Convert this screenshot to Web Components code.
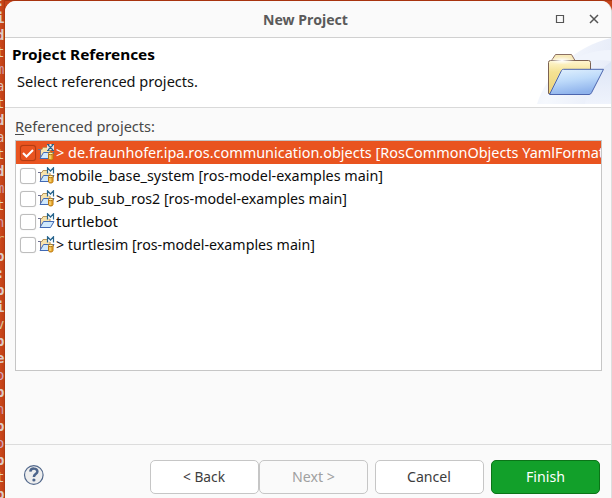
<!DOCTYPE html>
<html lang="en"><head><meta charset="utf-8"><title>New Project</title>
<style>html,body{margin:0;width:612px;height:498px;overflow:hidden;background:#c7451b}body{font:14.3px "Noto Sans","Open Sans",sans-serif;color:#111}</style></head>
<body><new-project-window></new-project-window>
<script>
class FitText extends HTMLElement{
 connectedCallback(){
  const w=this.getAttribute('w');
  this.attachShadow({mode:'open'}).innerHTML=`<style>:host{display:block;width:${w}px;white-space:pre;line-height:20px;flex:none}span{display:inline-block;transform-origin:0 50%}</style><span><slot></slot></span>`;
  const s=this.shadowRoot.querySelector('span');
  s.style.transform=`scaleX(${w/s.getBoundingClientRect().width})`;
 }}
customElements.define('fit-text',FitText);

class TerminalEdge extends HTMLElement{
 connectedCallback(){
  const chars=':idtmatdatdmtnrp:pivpeopnpoptp';
  const tones={o:'#d0a5c0',m:'#cf9aa8',a:'#dcc0b8',v:'#d8c09a',r:'#d8b070',t:'#e4d2b4',n:'#cf9aa8'};
  this.attachShadow({mode:'open'}).innerHTML=`<style>:host{display:block;width:5px;height:498px;overflow:hidden;background:linear-gradient(90deg,#cb481c,#c04016 70%,#a53410);font:bold 14px/17px "DejaVu Sans Mono",monospace}div{height:17px;margin-left:-4px;color:#dccbc7}div:first-of-type{margin-top:-7px}</style>`+
  [...chars].map(c=>`<div style="${tones[c]?'font-weight:400;color:'+tones[c]:''}">${c}</div>`).join('');
 }}
customElements.define('terminal-edge',TerminalEdge);

class TitleBar extends HTMLElement{
 connectedCallback(){this.attachShadow({mode:'open'}).innerHTML=`<style>:host{display:grid;grid-template-columns:258px 1fr auto;height:36px;background:#fafafa;border-bottom:1px solid #d0d0d0;box-sizing:content-box;color:#5a5a5a;font-weight:700;font-size:13.5px}fit-text{margin-top:9px}svg{display:block;margin-right:9px}</style><span></span><fit-text w="85"><slot></slot></fit-text><svg width="48" height="36" fill="none" stroke="#555"><path d="M2.500 14.500h7v7h-7z" stroke-width="1.200"/><path d="M36 14l8 8m0-8-8 8" stroke-width="1.500"/></svg>`}}
customElements.define('title-bar',TitleBar);

class WizardHeader extends HTMLElement{
 connectedCallback(){this.attachShadow({mode:'open'}).innerHTML=`<style>:host{display:flex;justify-content:space-between;height:69px;background:#fff;border-bottom:1px solid #d9d9d9}.t{padding:7px 0 0 7px}.h{font-weight:700;color:#000;font-size:13.8px}.s{margin:7px 0 0 5px;display:block}svg{display:block}</style>
 <div class="t"><fit-text class="h" w="143"><slot name="title"></slot></fit-text><fit-text class="s" w="181"><slot></slot></fit-text></div>
 <svg width="75" height="66" viewBox="536 38 75 66"><defs><linearGradient id="bg" x2="1" y2=".2"><stop stop-color="#eef2fb"/><stop offset=".3" stop-color="#f5f8fd"/><stop offset="1" stop-color="#e8edf9"/></linearGradient><linearGradient id="w" x2="0" y2="1"><stop stop-color="#dde5f6"/><stop offset="1" stop-color="#eff3fc"/></linearGradient><linearGradient id="y" x2="0" y2="1"><stop stop-color="#fff6d2"/><stop offset=".35" stop-color="#f4e293"/><stop offset="1" stop-color="#ecd27a"/></linearGradient><linearGradient id="b" x2=".3" y2="1"><stop stop-color="#e3f2fe"/><stop offset=".5" stop-color="#bddafa"/><stop offset="1" stop-color="#8fb3ec"/></linearGradient><radialGradient id="g"><stop stop-color="#fff"/><stop offset="1" stop-color="#fff" stop-opacity="0"/></radialGradient></defs>
 <path d="M537 104C546 74 576 46 611 38v66z" fill="url(#bg)"/><path d="M566 66c12-6 28-7 45-5v-11c-18 0-33 5-45 16z" fill="#f0f4fc"/><path d="M585 104c2-18 14-34 26-42v42z" fill="url(#w)"/>
 <path d="M551.500 60.500l4-6h16l3.500 6" fill="#f8eaba" stroke="#8c7064"/><path d="M548.500 93.500v-31q0-2 2-2h38q2 0 2 2v31z" fill="url(#y)" stroke="#7c6252"/><ellipse cx="562" cy="60.500" rx="13" ry="4" fill="url(#g)"/><path d="M549.500 94.500l12-24q.7-1.200 2-1.200h40l-12 23.500q-.8 1.700-2.500 1.700z" fill="url(#b)" stroke="#4c65ae"/></svg>`}}
customElements.define('wizard-header',WizardHeader);

class ProjectIcon extends HTMLElement{
 connectedCallback(){const x=this.hasAttribute('x'),c=!this.hasAttribute('plain');
 this.attachShadow({mode:'open'}).innerHTML=`<style>:host{display:block;width:17px;height:17px}svg{display:block}</style><svg width="17" height="17" viewBox="0 0 17 17"><path d="M2.500 14V5.500h1.500l1-2h4l1 2h2V13" fill="#f8e3ac" stroke="#b8985c"/><path d="M0 5.500h2.500V13" fill="none" stroke="#6c6f90"/><path d="M2 14.500L5.500 8.500h10.500l-3.500 6z" fill="#cfe8fd" stroke="#4169b4"/>
 <path d="M9 0h7v6H9z" fill="#f8fcff" opacity=".85"/><path d="${x?'M9 .5h2.500M13.500 .5h2.500M10 1l5 5M15 1l-5 5M9 6.500h2.500M13.500 6.500h2.500':'M9.500 6.500V.8l3 3.200 3-3.200v5.700'}" fill="none" stroke="#27648c" stroke-width="1.200"/>
 ${c?'<path d="M10.500 9.500v5c0 2 4.500 2 4.500 0v-5" fill="#e9ac32" stroke="#b87510"/><path d="M12 10.500v4.500" stroke="#ffe7a0"/><ellipse cx="12.750" cy="9.500" rx="2.300" ry="1.200" fill="#fff0b4" stroke="#b4770e"/>':''}</svg>`}}
customElements.define('project-icon',ProjectIcon);

class ProjectRow extends HTMLElement{
 connectedCallback(){const s=this.hasAttribute('selected');
 this.attachShadow({mode:'open'}).innerHTML=`<style>:host{display:flex;height:23px;align-items:center;padding-left:4px;box-sizing:border-box;color:${s?'#fff':'#0c0c0c'};background:${s?'#e95420':'#fff'}}.box{width:16px;height:16px;box-sizing:border-box;border:1px solid ${s?'#b43c12':'#bdbdbd'};border-radius:3px;background:${s?'#e95420':'#fff'};box-shadow:0 0 1px ${s?'#b43c12':'#ccc'};flex:none}.box svg{display:block}project-icon{margin-left:2px;flex:none}fit-text{margin:0 0 0 1px}</style><span class="box">${s?'<svg width="14" height="14"><path d="M2 7l3.500 3.500L12 4" fill="none" stroke="white" stroke-width="2"/></svg>':''}</span><project-icon ${s?'x':''} ${this.hasAttribute('plain')?'plain':''}></project-icon><fit-text w="${this.getAttribute('w')}"><slot></slot></fit-text>`}}
customElements.define('project-row',ProjectRow);

class ProjectList extends HTMLElement{
 connectedCallback(){this.attachShadow({mode:'open'}).innerHTML=`<style>:host{display:block;height:229px;border:1px solid #c6c6c6;background:#fff;overflow:hidden;margin:0 9px 0 10px}</style><slot></slot>`}}
customElements.define('project-list',ProjectList);

class DialogButton extends HTMLElement{
 connectedCallback(){const p=this.hasAttribute('primary'),d=this.hasAttribute('disabled');
 this.attachShadow({mode:'open'}).innerHTML=`<style>:host{display:flex;width:109px;height:34px;box-sizing:border-box;border:1px solid ${p?'#0b7418':'#c6c6c6'};border-radius:5px;align-items:center;justify-content:center;padding-right:1px;background:${p?'#12a02a':d?'#fafafa':'#fff'};color:${p?'#fff':d?'#a0a0a0':'#3d3d3d'}}</style><fit-text w="${this.getAttribute('w')}"><slot></slot></fit-text>`}}
customElements.define('dialog-button',DialogButton);

class NewProjectWindow extends HTMLElement{
 connectedCallback(){this.attachShadow({mode:'open'}).innerHTML=`<style>:host{display:flex;width:612px;height:498px;background:linear-gradient(#a8340f 1px,transparent 1px)}.win{width:607px;height:497px;margin-top:1px;background:#fafafa;border-radius:11px 11px 0 0;overflow:hidden;box-sizing:border-box;border-right:1px solid #dedede}.label{margin:9px 0 3px 10px;color:#484848}u{text-underline-offset:2px;text-decoration-thickness:1px}
 .foot{display:flex;margin-top:73px;border-top:1px solid #dcdcdc;padding:15px 0 0 18px;height:39px}.help{display:block;margin-top:4px}.pair{display:flex;margin-left:106px}.pair+dialog-button,.last{margin-left:7px}</style>
 <terminal-edge></terminal-edge><div class="win"><title-bar>New Project</title-bar><wizard-header><span slot="title">Project References</span>Select referenced projects.</wizard-header>
 <fit-text class="label" w="140"><u>R</u>eferenced projects:</fit-text>
 <project-list><project-row selected w="548">> de.fraunhofer.ipa.ros.communication.objects [RosCommonObjects YamlFormat</project-row><project-row w="327">mobile_base_system [ros-model-examples main]</project-row><project-row w="291">> pub_sub_ros2 [ros-model-examples main]</project-row><project-row plain w="62">turtlebot</project-row><project-row w="259">> turtlesim [ros-model-examples main]</project-row></project-list>
 <div class="foot"><svg class="help" width="21" height="22"><circle cx="10.800" cy="11" r="9.300" fill="#eeeeee" stroke="#53698c" stroke-width="1.200"/><path d="M7.300 7.700c.3-4.200 7.400-4 7.100 0-.2 2.400-3.500 2.500-3.500 5.200" fill="none" stroke="#4d658b" stroke-width="2.500"/><circle cx="10.900" cy="16" r="1.600" fill="#4d658b"/></svg>
 <div class="pair"><dialog-button w="42">&lt; Back</dialog-button><dialog-button disabled w="43">Next ></dialog-button></div><dialog-button w="44">Cancel</dialog-button><dialog-button class="last" primary w="39">Finish</dialog-button></div></div>`}}
customElements.define('new-project-window',NewProjectWindow);
</script></body></html>
